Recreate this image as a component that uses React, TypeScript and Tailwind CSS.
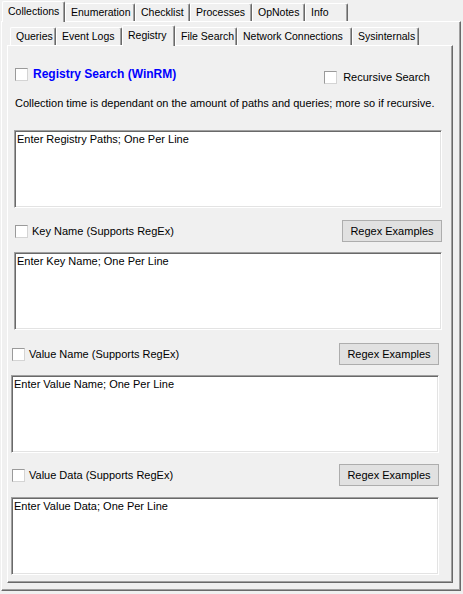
import React from "react";

type TabDef = { label: string; w: string; active?: boolean };

const outerTabs: TabDef[] = [
  { label: "Collections", w: "w-[63px]", active: true },
  { label: "Enumeration", w: "w-[70px]" },
  { label: "Checklist", w: "w-[55px]" },
  { label: "Processes", w: "w-[62px]" },
  { label: "OpNotes", w: "w-[53px]" },
  { label: "Info", w: "w-[43px]" },
];

const innerTabs: TabDef[] = [
  { label: "Queries", w: "w-[46px]" },
  { label: "Event Logs", w: "w-[66px]" },
  { label: "Registry", w: "w-[53px]", active: true },
  { label: "File Search", w: "w-[62px]" },
  { label: "Network Connections", w: "w-[115px]" },
  { label: "Sysinternals", w: "w-[67px]" },
];

const Tab = ({ tab }: { tab: TabDef }) => (
  <div
    className={`${tab.w} ${
      tab.active ? "relative z-10 h-[21px] -mb-px bg-[#f0f0f0] pb-[1px]" : "h-[18px]"
    } flex items-center pl-[5px] text-[10.5px] border-l border-t border-r border-l-white border-t-white border-r-[#696969] shadow-[inset_-1px_0_0_#a0a0a0] rounded-t-[2px] whitespace-nowrap overflow-hidden`}
  >
    {tab.label}
  </div>
);

const Check = () => (
  <span className="block shrink-0 w-[13px] h-[13px] bg-white border border-t-[#9a9a9a] border-l-[#9a9a9a] border-r-[#d4d4d4] border-b-[#d4d4d4]" />
);

const Box = ({ text, cls }: { text: string; cls: string }) => (
  <textarea
    defaultValue={text}
    readOnly
    className={`${cls} w-[428px] h-[78px] shrink-0 resize-none outline-none bg-white px-[2px] py-[2px] leading-[13px] text-[11px] border border-t-[#a0a0a0] border-l-[#a0a0a0] border-r-white border-b-white shadow-[inset_1px_1px_0_#696969,inset_-1px_-1px_0_#e3e3e3]`}
  />
);

const RegexRow = ({ label, cls }: { label: string; cls: string }) => (
  <div className={`${cls} w-[427px] h-[22px] flex items-center`}>
    <Check />
    <span className="ml-[4px] leading-[13px]">{label}</span>
    <button className="ml-auto w-[100px] h-[22px] bg-[#e1e1e1] border border-[#adadad] text-[11px]">
      Regex Examples
    </button>
  </div>
);

export default function App() {
  return (
    <div className="w-[463px] h-[594px] bg-[#f0f0f0] pt-[1px] overflow-hidden font-['Liberation_Sans',Arial,sans-serif] text-[11px] text-black">
      <div className="flex items-end h-[20px] pl-[2px]">
        {outerTabs.map((t) => (
          <Tab key={t.label} tab={t} />
        ))}
      </div>
      <div className="ml-[1px] w-[460px] h-[570px] pt-[3px] border border-l-white border-t-white border-r-[#696969] border-b-[#696969] shadow-[inset_-1px_-1px_0_#a0a0a0]">
        <div className="flex items-end h-[20px] pl-[8px]">
          {innerTabs.map((t) => (
            <Tab key={t.label} tab={t} />
          ))}
        </div>
        <div className="ml-[5px] w-[446px] h-[538px] flex flex-col border border-l-white border-t-white border-r-[#696969] border-b-[#696969] shadow-[inset_-1px_-1px_0_#a0a0a0]">
          <div className="mt-[22px] ml-[7px] w-[415px] h-[13px] flex items-start">
            <Check />
            <span className="ml-[5px] leading-[13px] text-[12px] font-bold text-[#0000ff] whitespace-nowrap">
              Registry Search (WinRM)
            </span>
            <div className="ml-auto mt-[3px] flex items-center">
              <Check />
              <span className="ml-[6px] leading-[13px] whitespace-nowrap">
                Recursive Search
              </span>
            </div>
          </div>
          <p className="mt-[16px] ml-[7px] leading-[13px] whitespace-nowrap">
            Collection time is dependant on the amount of paths and queries; more so if recursive.
          </p>
          <Box cls="mt-[20px] ml-[6px]" text="Enter Registry Paths; One Per Line" />
          <RegexRow cls="mt-[12px] ml-[7px]" label="Key Name (Supports RegEx)" />
          <Box cls="mt-[10px] ml-[6px]" text="Enter Key Name; One Per Line" />
          <RegexRow cls="mt-[13px] ml-[4px]" label="Value Name (Supports RegEx)" />
          <Box cls="mt-[10px] ml-[3px]" text="Enter Value Name; One Per Line" />
          <RegexRow cls="mt-[11px] ml-[4px]" label="Value Data (Supports RegEx)" />
          <Box cls="mt-[11px] ml-[3px]" text="Enter Value Data; One Per Line" />
        </div>
      </div>
    </div>
  );
}
